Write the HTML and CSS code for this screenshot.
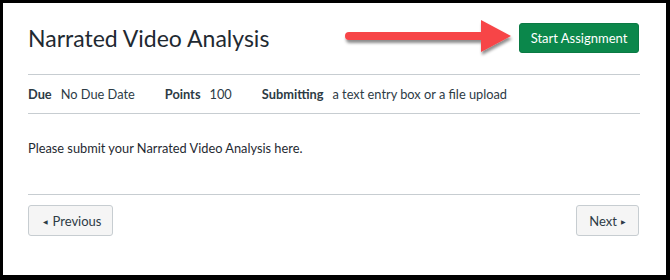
FILE: index.html
```html
<!DOCTYPE html>
<html>
<head>
<meta charset="utf-8">
<link rel="stylesheet" href="styles.css">
</head>
<body>
<div class="frame">
  <div class="header">
    <h1 class="title">Narrated Video Analysis</h1>
    <button class="start">Start Assignment</button>
  </div>
  <div class="meta">
    <span class="label">Due</span><span class="value">No Due Date</span>
    <span class="label">Points</span><span class="value">100</span>
    <span class="label">Submitting</span><span class="value">a text entry box or a file upload</span>
  </div>
  <div class="desc">Please submit your Narrated Video Analysis here.</div>
  <div class="footer">
    <button class="nav prev"><span class="tri">&#9664;</span>Previous</button>
    <button class="nav next">Next<span class="tri tri-r">&#9654;</span></button>
  </div>
  <svg class="arrow" width="180" height="50" viewBox="337 14 180 50">
    <defs>
      <filter id="sh" x="-10%" y="-30%" width="130%" height="180%">
        <feDropShadow dx="1" dy="3" stdDeviation="1.6" flood-color="#000" flood-opacity="0.45"/>
      </filter>
    </defs>
    <g filter="url(#sh)" fill="#f74447" stroke="none">
      <line x1="349" y1="36" x2="486" y2="36" stroke="#f74447" stroke-width="8" stroke-linecap="round"/>
      <polygon points="481,20 511,36 481,52"/>
    </g>
  </svg>
</div>
</body>
</html>
```

FILE: styles.css
```css
* {
  box-sizing: border-box;
}
html, body {
  margin: 0;
  padding: 0;
  background: #000;
}
body {
  width: 670px;
  height: 280px;
  overflow: hidden;
}
.frame {
  position: relative;
  margin: 3px 0 0 3px;
  width: 663px;
  height: 272px;
  background: #fff;
  padding: 0 26px 0 25px;
  font-family: Lato, "Open Sans", sans-serif;
  color: #2d3b45;
}
.header {
  display: flex;
  align-items: center;
  justify-content: space-between;
  padding: 20px 1px 21px 0;
  border-bottom: 1px solid #c7cdd1;
}
.title {
  margin: 0;
  font-weight: 400;
  font-size: 23px;
  line-height: 30px;
  color: #1f2a32;
}
.start {
  width: 120px;
  height: 30px;
  background: #0b874b;
  color: #fff;
  border: 1px solid #0a7a44;
  border-radius: 3px;
  font-family: Lato, sans-serif;
  font-size: 13px;
  padding: 0;
  white-space: nowrap;
}
.meta {
  display: flex;
  align-items: center;
  height: 39px;
  border-bottom: 1px solid #c7cdd1;
  font-size: 12.8px;
  color: #2d3b45;
}
.label {
  font-weight: 700;
  margin-right: 9px;
}
.value {
  margin-right: 30px;
}
.desc {
  height: 81px;
  border-bottom: 1px solid #c7cdd1;
  font-size: 12.8px;
  line-height: 16px;
  padding-top: 26px;
  color: #1f2a32;
}
.footer {
  display: flex;
  justify-content: space-between;
  padding: 10px 1px 0 0;
}
.nav {
  height: 31px;
  padding: 0;
  background: #f5f5f5;
  border: 1px solid #c7cdd1;
  border-radius: 3px;
  font-family: Lato, sans-serif;
  font-size: 13px;
  color: #2d3b45;
  white-space: nowrap;
}
.prev {
  width: 85px;
  padding-left: 3px;
}
.next {
  width: 63px;
}
.tri {
  font-size: 6px;
  vertical-align: 2px;
  margin-right: 5px;
}
.tri-r {
  margin-right: 0;
  margin-left: 4px;
}
.arrow {
  position: absolute;
  left: 334px;
  top: 11px;
}
```
